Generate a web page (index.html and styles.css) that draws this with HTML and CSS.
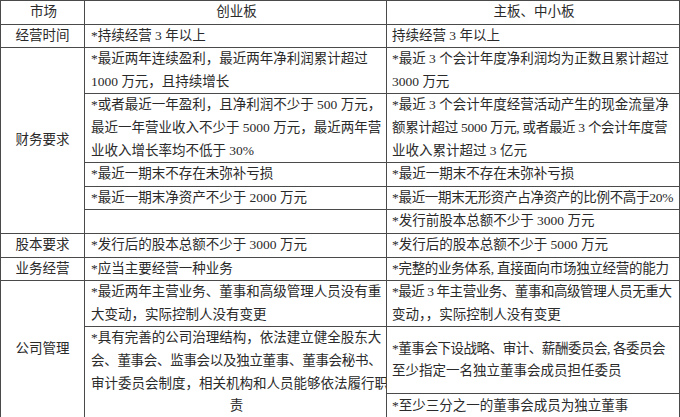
FILE: index.html
```html
<!DOCTYPE html>
<html lang="zh-CN">
<head>
<meta charset="utf-8">
<link rel="stylesheet" href="styles.css">
</head>
<body>
<table class="cmp">
  <colgroup><col class="c1"><col class="c2"><col class="c3"></colgroup>
  <tr>
    <th>市场</th><th>创业板</th><th>主板、中小板</th>
  </tr>
  <tr>
    <td class="k">经营时间</td><td>*持续经营 3 年以上</td><td class="r">持续经营 3 年以上</td>
  </tr>
  <tr>
    <td class="k" rowspan="5">财务要求</td>
    <td>*最近两年连续盈利，最近两年净利润累计超过<br>1000 万元，且持续增长</td>
    <td class="r">*最近 3 个会计年度净利润均为正数且累计超过<br>3000 万元</td>
  </tr>
  <tr>
    <td>*或者最近一年盈利，且净利润不少于 500 万元，<br>最近一年营业收入不少于 5000 万元，最近两年营<br>业收入增长率均不低于 30%</td>
    <td class="r">*最近 3 个会计年度经营活动产生的现金流量净<br><span class="tight">额累计超过 5000 万元, 或者最近 3 个会计年度营</span><br>业收入累计超过 3 亿元</td>
  </tr>
  <tr>
    <td>*最近一期末不存在未弥补亏损</td>
    <td class="r">*最近一期末不存在未弥补亏损</td>
  </tr>
  <tr>
    <td>*最近一期末净资产不少于 2000 万元</td>
    <td class="r"><span class="tight">*最近一期末无形资产占净资产的比例不高于20%</span></td>
  </tr>
  <tr>
    <td>&nbsp;</td>
    <td class="r">*发行前股本总额不少于 3000 万元</td>
  </tr>
  <tr>
    <td class="k">股本要求</td><td>*发行后的股本总额不少于 3000 万元</td><td class="r">*发行后的股本总额不少于 5000 万元</td>
  </tr>
  <tr>
    <td class="k">业务经营</td><td>*应当主要经营一种业务</td><td class="r"><span class="tight">*完整的业务体系, 直接面向市场独立经营的能力</span></td>
  </tr>
  <tr>
    <td class="k" rowspan="3">公司管理</td>
    <td>*最近两年主营业务、董事和高级管理人员没有重<br>大变动，实际控制人没有变更</td>
    <td class="r"><span class="tighter">*最近 3 年主营业务、董事和高级管理人员无重大</span><br>变动，，实际控制人没有变更</td>
  </tr>
  <tr>
    <td rowspan="2"><span class="ln">*具有完善的公司治理结构，依法建立健全股东大</span><span class="ln tight">会、董事会、监事会以及独立董事、董事会秘书、</span><span class="ln">审计委员会制度，相关机构和人员能够依法履行职</span><span class="ln mid">责</span></td>
    <td class="r tall"><span class="tighter">*董事会下设战略、审计、薪酬委员会, 各委员会</span><br>至少指定一名独立董事会成员担任委员</td>
  </tr>
  <tr>
    <td class="r">*至少三分之一的董事会成员为独立董事</td>
  </tr>
</table>
</body>
</html>
```

FILE: styles.css
```css
html, body {
  margin: 0;
  padding: 0;
  background: #ffffff;
}

body {
  font-family: "Liberation Serif", "Noto Sans CJK SC", serif;
  font-size: 13.5px;
  color: #2a2a2a;
}

.cmp {
  border-collapse: collapse;
  table-layout: fixed;
  width: 679px;
}

.c1 { width: 84px; }
.c2 { width: 302px; }
.c3 { width: 293px; }

.cmp th,
.cmp td {
  border: 1px solid #4a4a4a;
  padding: 0 4px 0 6px;
  line-height: 22.6px;
  white-space: nowrap;
  vertical-align: middle;
  text-align: left;
  overflow: hidden;
}

.cmp th {
  font-weight: normal;
  text-align: center;
}

.cmp td.k {
  text-align: center;
  padding: 0;
}

.cmp td.r {
  padding-left: 5px;
  padding-right: 2px;
}

.cmp td.tall {
  height: 66px;
}

.ln {
  display: block;
}

.mid {
  text-align: center;
}

.tight {
  letter-spacing: -0.3px;
}

.tighter {
  letter-spacing: -0.45px;
}
```
